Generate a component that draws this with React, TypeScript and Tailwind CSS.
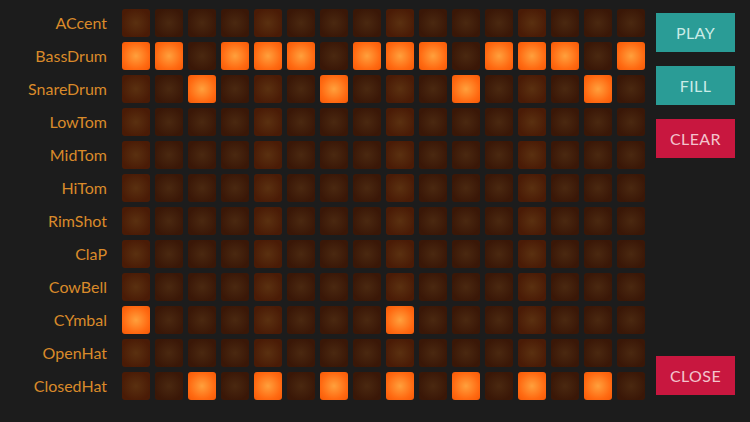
import React from "react";

const tracks = [
  { name: "ACcent", on: [] as number[] },
  { name: "BassDrum", on: [0, 1, 3, 4, 5, 7, 8, 9, 11, 12, 13, 15] },
  { name: "SnareDrum", on: [2, 6, 10, 14] },
  { name: "LowTom", on: [] },
  { name: "MidTom", on: [] },
  { name: "HiTom", on: [] },
  { name: "RimShot", on: [] },
  { name: "ClaP", on: [] },
  { name: "CowBell", on: [] },
  { name: "CYmbal", on: [0, 8] },
  { name: "OpenHat", on: [] },
  { name: "ClosedHat", on: [2, 4, 6, 8, 10, 12, 14] },
];

const steps = Array.from({ length: 16 }, (_, i) => i);

function Pad({ on, beat }: { on: boolean; beat: boolean }) {
  let cls = "bg-[radial-gradient(circle,#4a2810_0%,#3a1707_75%)]";
  if (beat) cls = "bg-[radial-gradient(circle,#5a3010_0%,#4a1b06_75%)]";
  if (on) cls = "bg-[radial-gradient(circle,#ffa03c_0%,#ff6a12_65%,#f55806_100%)]";
  return <div className={`w-[28px] h-[28px] rounded-[3px] ${cls}`} />;
}

export default function App() {
  return (
    <div
      className="w-[750px] h-[422px] bg-[#1c1c1c] flex overflow-hidden"
      style={{ fontFamily: "Lato, 'Noto Sans', sans-serif" }}
    >
      <div className="flex flex-col gap-[5px] pt-[9px] w-[107px]">
        {tracks.map((t) => (
          <div key={t.name} className="h-[28px] flex items-center justify-end text-[16px] text-[#d98a2a]">
            {t.name}
          </div>
        ))}
      </div>

      <div className="ml-[15px] pt-[9px] flex flex-col gap-[5px]">
        {tracks.map((t) => (
          <div key={t.name} className="flex gap-[5px]">
            {steps.map((s) => (
              <Pad key={s} on={t.on.includes(s)} beat={s % 4 === 0} />
            ))}
          </div>
        ))}
      </div>

      <div className="ml-[11px] pt-[13px] pb-[27px] flex flex-col w-[79px]">
        <button className="h-[39px] bg-[#2a9c96] text-[#c9ebe7] text-[16px] tracking-wide">PLAY</button>
        <button className="mt-[14px] h-[39px] bg-[#2a9c96] text-[#c9ebe7] text-[16px] tracking-wide">FILL</button>
        <button className="mt-[14px] h-[39px] bg-[#c8173f] text-[#f3c4cd] text-[16px] tracking-wide">CLEAR</button>
        <div className="flex-1" />
        <button className="h-[39px] bg-[#c8173f] text-[#f3c4cd] text-[16px] tracking-wide">CLOSE</button>
      </div>
    </div>
  );
}
